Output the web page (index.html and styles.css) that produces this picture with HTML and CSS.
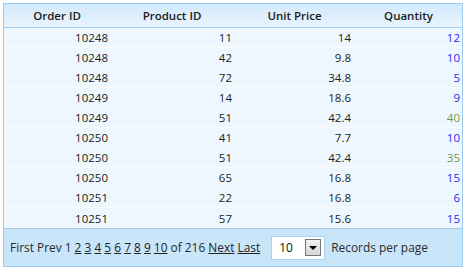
FILE: index.html
```html
<!DOCTYPE html>
<html>
<head>
<meta charset="utf-8">
<link rel="stylesheet" href="styles.css">
</head>
<body>
<div class="grid">
  <table class="data">
    <colgroup>
      <col class="c1"><col class="c2"><col class="c3"><col class="c4">
    </colgroup>
    <thead>
      <tr><th>Order ID</th><th>Product ID</th><th>Unit Price</th><th>Quantity</th></tr>
    </thead>
    <tbody>
      <tr><td>10248</td><td>11</td><td class="p">14</td><td class="q lo">12</td></tr>
      <tr><td>10248</td><td>42</td><td class="p">9.8</td><td class="q lo">10</td></tr>
      <tr><td>10248</td><td>72</td><td class="p">34.8</td><td class="q lo">5</td></tr>
      <tr><td>10249</td><td>14</td><td class="p">18.6</td><td class="q lo">9</td></tr>
      <tr><td>10249</td><td>51</td><td class="p">42.4</td><td class="q hi">40</td></tr>
      <tr><td>10250</td><td>41</td><td class="p">7.7</td><td class="q lo">10</td></tr>
      <tr><td>10250</td><td>51</td><td class="p">42.4</td><td class="q hi">35</td></tr>
      <tr><td>10250</td><td>65</td><td class="p">16.8</td><td class="q lo">15</td></tr>
      <tr><td>10251</td><td>22</td><td class="p">16.8</td><td class="q lo">6</td></tr>
      <tr><td>10251</td><td>57</td><td class="p">15.6</td><td class="q lo">15</td></tr>
    </tbody>
  </table>
  <div class="pager">
    <div class="pages">First Prev 1 <a>2</a> <a>3</a> <a>4</a> <a>5</a> <a>6</a> <a>7</a> <a>8</a> <a>9</a> <a>10</a> of 216 <a>Next</a> <a>Last</a></div>
    <div class="select">
      <span class="val">10</span>
      <span class="btn"><svg width="8" height="4" viewBox="0 0 8 4"><path d="M0 0H8L4 4Z" fill="#000"/></svg></span>
    </div>
    <div class="rpp">Records per page</div>
  </div>
</div>
</body>
</html>
```
FILE: styles.css
```css
html, body { margin: 0; padding: 0; background: #fff; }
body { font-family: "Open Sans", "DejaVu Sans", sans-serif; font-size: 11.5px; color: #222; }
.grid {
  margin: 3px 0 0 3px;
  width: 458px;
  border: 1px solid #9fcbee;
  background: #eef7fe;
}
.data { border-collapse: collapse; width: 458px; table-layout: fixed; }
.c1 { width: 106px; } .c2 { width: 124px; } .c3 { width: 121px; } .c4 { width: 107px; }
.data th {
  height: 23px; padding: 0; font-weight: 600; color: #1b1b1b; text-align: center;
  background: linear-gradient(#d2e9fb, #e9f5fe);
  border-bottom: 1px solid #a5cff0;
}
.data td {
  height: 19px; padding: 0 2px 0 0; text-align: right;
  border-bottom: 1px solid #f9fcff; line-height: 19px;
}
.data td.p { padding-right: 4px; }
.data tbody tr:last-child td { border-bottom: none; height: 20px; }
.q.lo { color: #2b2bf0; }
.q.hi { color: #6f9a55; }
.pager {
  display: flex; align-items: center;
  height: 37px; background: #c9e5f9; border-top: 1px solid #9fcdf0;
  padding-left: 6px; color: #2a2a2a; font-size: 11.9px;
}
.pages { margin-top: -2px; }
.pages a { color: #222; text-decoration: underline; }
.select {
  margin-left: 11px; width: 52px; height: 22px; background: #fff; border: 1px solid #a9d1ee;
  display: flex; align-items: center; box-sizing: content-box;
}
.val { margin-left: 7px; flex: 1; font-size: 12px; color: #111; }
.btn {
  width: 14px; height: 15px; margin-right: 3px; border: 1px solid #777;
  background: linear-gradient(#f2f2f2, #d6d6d6);
  display: flex; align-items: center; justify-content: center;
}
.rpp { margin-left: 6px; margin-top: -2px; }
```
